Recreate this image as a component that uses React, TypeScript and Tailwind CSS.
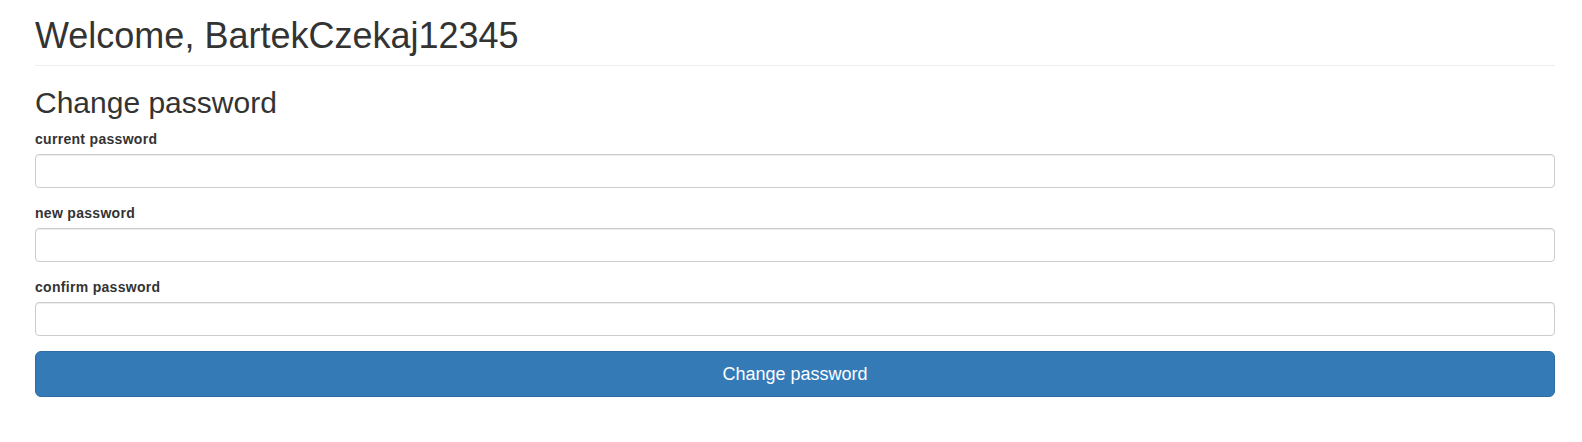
import React from "react";

function Field({ label }: { label: string }) {
  return (
    <div className="mb-[15px]">
      <label className="block mb-[5px] text-[14px] leading-[20px] font-bold tracking-[0.3px] text-[#333]">{label}</label>
      <input
        type="password"
        className="block w-full h-[34px] px-[12px] py-[6px] text-[14px] bg-white border border-[#ccc] rounded-[4px] shadow-[inset_0_1px_1px_rgba(0,0,0,0.075)] outline-none"
      />
    </div>
  );
}

export default function App() {
  return (
    <div
      className="min-h-[442px] bg-white text-[#333] pl-[35px] pr-[27px] pt-[16px]"
      style={{ fontFamily: '"Liberation Sans", Arial, sans-serif' }}
    >
      <div className="pb-[9px] border-b border-[#eee] mb-[20px]">
        <h1 className="text-[36px] leading-[1.1] font-normal">Welcome, BartekCzekaj12345</h1>
      </div>
      <h2 className="text-[30px] leading-[1.1] font-normal mb-[10px]">Change password</h2>
      <form onSubmit={(e) => e.preventDefault()}>
        <Field label="current password" />
        <Field label="new password" />
        <Field label="confirm password" />
        <button
          type="submit"
          className="block w-full h-[46px] px-[16px] py-[10px] text-[18px] leading-[24px] text-white bg-[#337ab7] border border-[#2e6da4] rounded-[6px]"
        >
          Change password
        </button>
      </form>
    </div>
  );
}
